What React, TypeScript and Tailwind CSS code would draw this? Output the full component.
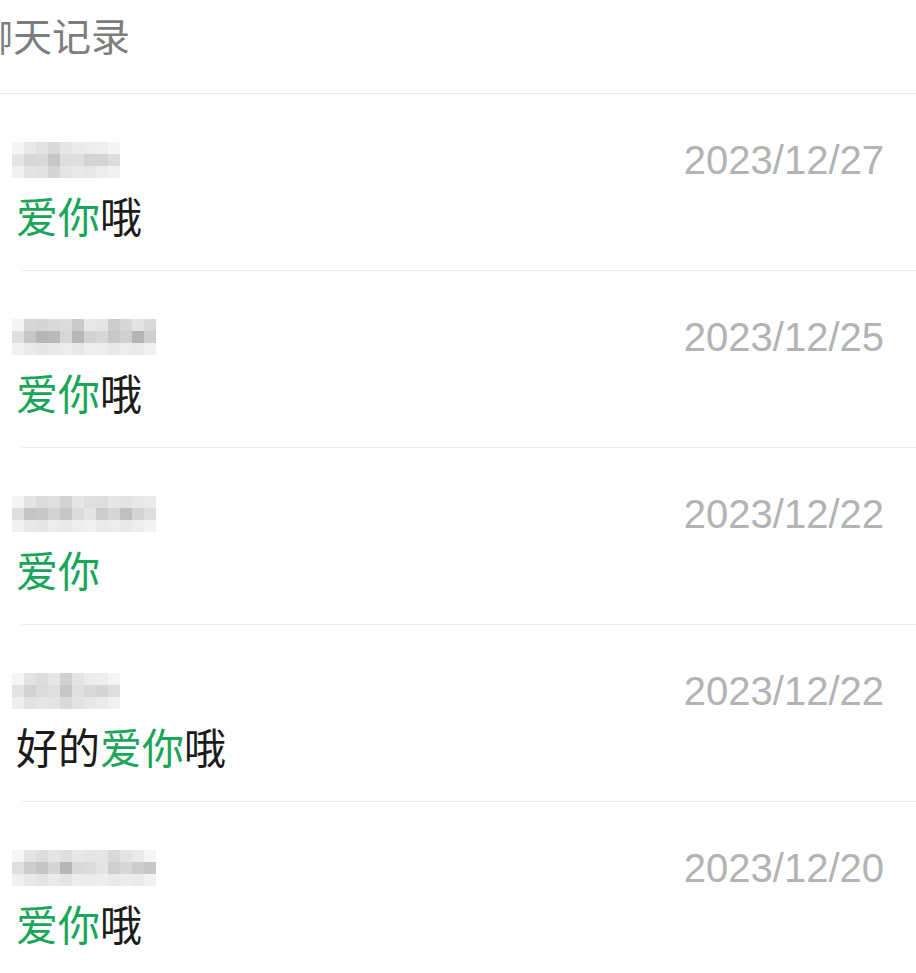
import React from 'react';

type Part = { text: string; hit?: boolean };

type Record = {
  mosaic: string[][];
  date: string;
  parts: Part[];
};

const RECORDS: Record[] = [
  {
    mosaic: [
      ['#ffffff', '#f3f3f3', '#ececec', '#e2e2e2', '#f0f0f0', '#f4f4f4', '#f6f6f6', '#f8f8f8', '#ffffff'],
      ['#ededed', '#e0e0e0', '#e2e2e2', '#cfcfcf', '#e6e6e6', '#e8e8e8', '#dcdcdc', '#dedede', '#e6e6e6'],
      ['#fafafa', '#eeeeee', '#ebebeb', '#dedede', '#efefef', '#f3f3f3', '#f1f1f1', '#f6f6f6', '#fbfbfb'],
    ],
    date: '2023/12/27',
    parts: [{ text: '爱你', hit: true }, { text: '哦' }],
  },
  {
    mosaic: [
      ['#ffffff', '#e0e0e0', '#dedede', '#e2e2e2', '#e4e4e4', '#d2d2d2', '#f2f2f2', '#efefef', '#d6d6d6', '#e0e0e0', '#ececec', '#e2e2e2'],
      ['#e8e8e8', '#cfcfcf', '#bdbdbd', '#c2c2c2', '#e0e0e0', '#bfbfbf', '#dcdcdc', '#e0e0e0', '#d0d0d0', '#dadada', '#bdbdbd', '#d8d8d8'],
      ['#fbfbfb', '#f4f4f4', '#f0f0f0', '#f3f3f3', '#f6f6f6', '#f2f2f2', '#f8f8f8', '#f7f7f7', '#f2f2f2', '#f6f6f6', '#f4f4f4', '#fafafa'],
    ],
    date: '2023/12/25',
    parts: [{ text: '爱你', hit: true }, { text: '哦' }],
  },
  {
    mosaic: [
      ['#ffffff', '#eeeeee', '#e4e4e4', '#e8e8e8', '#dcdcdc', '#f0f0f0', '#e8e8e8', '#e6e6e6', '#f0f0f0', '#ececec', '#f2f2f2', '#f4f4f4'],
      ['#e6e6e6', '#cdcdcd', '#d0d0d0', '#dcdcdc', '#cfcfcf', '#e4e4e4', '#ededed', '#d6d6d6', '#e0e0e0', '#c8c8c8', '#dddddd', '#e6e6e6'],
      ['#fbfbfb', '#f2f2f2', '#f0f0f0', '#f6f6f6', '#f3f3f3', '#f8f8f8', '#fbfbfb', '#f4f4f4', '#f6f6f6', '#f3f3f3', '#f8f8f8', '#fdfdfd'],
    ],
    date: '2023/12/22',
    parts: [{ text: '爱你', hit: true }],
  },
  {
    mosaic: [
      ['#ffffff', '#ececec', '#e6e6e6', '#f0f0f0', '#dadada', '#eeeeee', '#f6f6f6', '#f8f8f8', '#ffffff'],
      ['#ececec', '#dcdcdc', '#e4e4e4', '#e8e8e8', '#cfcfcf', '#e8e8e8', '#e2e2e2', '#dedede', '#e6e6e6'],
      ['#f8f8f8', '#ebebeb', '#f0f0f0', '#eeeeee', '#e2e2e2', '#ececec', '#f2f2f2', '#f5f5f5', '#fbfbfb'],
    ],
    date: '2023/12/22',
    parts: [{ text: '好的' }, { text: '爱你', hit: true }, { text: '哦' }],
  },
  {
    mosaic: [
      ['#ffffff', '#ededed', '#e6e6e6', '#efefef', '#e8e8e8', '#f2f2f2', '#efefef', '#f0f0f0', '#e2e2e2', '#ececec', '#f4f4f4', '#ffffff'],
      ['#e8e8e8', '#d6d6d6', '#cdcdcd', '#dedede', '#bfbfbf', '#e2e2e2', '#e4e4e4', '#ededed', '#d8d8d8', '#e0e0e0', '#d4d4d4', '#cfcfcf'],
      ['#fafafa', '#f2f2f2', '#eeeeee', '#f4f4f4', '#eeeeee', '#f7f7f7', '#f6f6f6', '#f8f8f8', '#f3f3f3', '#f6f6f6', '#f4f4f4', '#fbfbfb'],
    ],
    date: '2023/12/20',
    parts: [{ text: '爱你', hit: true }, { text: '哦' }],
  },
];

const Mosaic: React.FC<{ cells: string[][] }> = ({ cells }) => (
  <div className="flex flex-col brightness-[0.96]">
    {cells.map((row, i) => (
      <div key={i} className="flex">
        {row.map((c, j) => (
          <div key={j} className="w-[12px] h-[12px]" style={{ backgroundColor: c }} />
        ))}
      </div>
    ))}
  </div>
);

const RecordRow: React.FC<{ record: Record }> = ({ record }) => (
  <div className="h-[176px] pt-[46px] pl-[12px] pr-[32px]">
    <div className="h-[40px] flex items-center justify-between">
      <Mosaic cells={record.mosaic} />
      <span
        className="text-[40px] leading-[40px] text-[#b3b3b3]"
        style={{ fontFamily: '"Liberation Sans", Arial, sans-serif' }}
      >
        {record.date}
      </span>
    </div>
    <div className="mt-[15px] h-[40px] pl-[4px] text-[42px] leading-[40px] text-[#1b1b1b] whitespace-nowrap">
      {record.parts.map((p, i) => (
        <span key={i} className={p.hit ? 'text-[#1aa65a]' : ''}>
          {p.text}
        </span>
      ))}
    </div>
  </div>
);

const App: React.FC = () => {
  return (
    <div
      className="w-[916px] h-[973px] overflow-hidden bg-white"
      style={{ fontFamily: '"Noto Sans CJK SC", "Noto Sans", sans-serif' }}
    >
      {/* Header */}
      <div className="h-[94px] pt-[12px] border-b border-[#e8e8e8] overflow-hidden">
        <div className="-ml-[26px] text-[39px] leading-[44px] text-[#7d7d7d] whitespace-nowrap">聊天记录</div>
      </div>

      {/* Records */}
      {RECORDS.map((r, i) => (
        <div key={i}>
          <RecordRow record={r} />
          {i < RECORDS.length - 1 && <div className="ml-[22px] h-px bg-[#ebebeb]" />}
        </div>
      ))}
    </div>
  );
};

export default App;
